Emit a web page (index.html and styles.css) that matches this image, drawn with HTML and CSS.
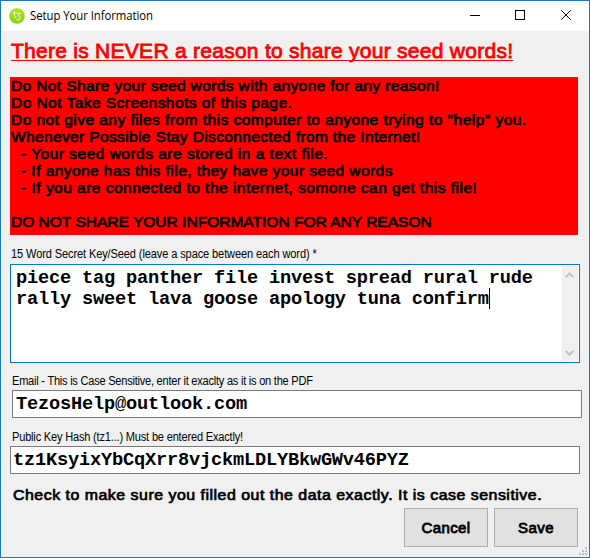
FILE: index.html
```html
<!DOCTYPE html>
<html lang="en">
<head>
<meta charset="utf-8">
<title>Setup Your Information</title>
<link rel="stylesheet" href="styles.css">
</head>
<body>
<div class="window">
  <header class="titlebar">
    <svg class="logo" width="16" height="16" viewBox="0 0 16 16">
      <defs><linearGradient id="g" x1="0" y1="0" x2="0" y2="1"><stop offset="0" stop-color="#b4e31a"/><stop offset="1" stop-color="#80d30c"/></linearGradient></defs>
      <circle cx="8" cy="8" r="7.8" fill="url(#g)"/>
      <path d="M3.7 5.2H11.5L8.9 7.7Q11.3 7.7 11.3 9.8Q11.3 12 8.9 12Q7.4 12 7.4 10.8M5.5 3.2V8.5Q5.5 9.8 7.3 9.2" fill="none" stroke="#f4fbe0" stroke-width="1"/>
    </svg>
    <span class="title">Setup Your Information</span>
    <svg class="controls" width="138" height="30" viewBox="0 0 138 30" fill="none" stroke="#000" stroke-width="1">
      <path d="M19 14.5H29"/>
      <rect x="64.5" y="9.5" width="9" height="9"/>
      <path d="M110.2 9.2L119.8 18.8M119.8 9.2L110.2 18.8"/>
    </svg>
  </header>
  <main class="client">
    <h1 class="headline"><span class="headline-text">There is NEVER a reason to share your seed words!</span></h1>
    <div class="warning">
      <div class="line l1">Do Not Share your seed words with anyone for any reason!</div>
      <div class="line l2">Do Not Take Screenshots of this page.</div>
      <div class="line l3">Do not give any files from this computer to anyone trying to "help" you.</div>
      <div class="line l4">Whenever Possible Stay Disconnected from the Internet!</div>
      <div class="line item l5">- Your seed words are stored in a text file.</div>
      <div class="line item l6">- If anyone has this file, they have your seed words</div>
      <div class="line item l7">- If you are connected to the internet, somone can get this file!</div>
      <div class="blank"></div>
      <div class="line l9">DO NOT SHARE YOUR INFORMATION FOR ANY REASON</div>
    </div>
    <div class="label label-seed">15 Word Secret Key/Seed (leave a space between each word) *</div>
    <div class="seed">
      <div class="seed-text">piece tag panther file invest spread rural rude<br>rally sweet lava goose apology tuna confirm<span class="caret"></span></div>
      <div class="scroll">
        <svg width="16" height="16" viewBox="0 0 16 16"><path d="M3.7 11.1L7.5 7.3L11.3 11.1" fill="none" stroke="#bfbfbf" stroke-width="2"/></svg>
        <svg width="16" height="16" viewBox="0 0 16 16"><path d="M3.7 5.9L7.5 9.7L11.3 5.9" fill="none" stroke="#bfbfbf" stroke-width="2"/></svg>
      </div>
    </div>
    <div class="label label-email">Email - This is Case Sensitive, enter it exaclty as it is on the PDF</div>
    <div class="field email">TezosHelp<span class="at">@</span>outlook.com</div>
    <div class="label label-hash">Public Key Hash (tz1...) Must be entered Exactly!</div>
    <div class="field hash">tz1KsyixYbCqXrr8vjckmLDLYBkwGWv46PYZ</div>
    <div class="check">Check to make sure you filled out the data exactly. It is case sensitive.</div>
    <div class="actions">
      <button class="btn" type="button">Cancel</button>
      <button class="btn save" type="button">Save</button>
    </div>
    <svg class="grip" width="8" height="8" viewBox="0 0 8 8" fill="#bfbfbf"><path d="M6 0h2v2h-2zM3 3h2v2h-2zM6 3h2v2h-2zM0 6h2v2h-2zM3 6h2v2h-2zM6 6h2v2h-2z"/></svg>
  </main>
</div>
</body>
</html>
```
FILE: styles.css
```css
* { box-sizing: border-box; }
body { margin: 0; font-family: "Liberation Sans", Arial, sans-serif; color: #000; }
.window { width: 590px; height: 558px; border: 1px solid #1979ca; background: #f0f0f0; display: flex; flex-direction: column; position: relative; overflow: hidden; white-space: nowrap; }
.titlebar { height: 30px; flex: none; background: #fff; display: flex; align-items: center; padding-left: 8px; }
.logo { margin-top: -1px; }
.title { font: 12px/30px "Open Sans", "Noto Sans", sans-serif; margin-left: 5px; letter-spacing: -0.05px; transform: scaleX(0.945); transform-origin: 0 0; }
.controls { margin-left: auto; }
.client { flex: 1; display: flex; flex-direction: column; }
.headline { margin: 7px 0 0 10px; height: 31px; font-size: 21px; line-height: 26px; font-weight: 400; color: #f00; -webkit-text-stroke: 0.8px #f00; }
.headline-text { display: inline-block; height: 23px; border-bottom: 1px solid #f00; letter-spacing: 0.27px; }
.warning { margin: 8px 0 0 9px; width: 568px; height: 158px; padding: 1px 1px 0; background: #f00; font-size: 14px; line-height: 17px; -webkit-text-stroke: 0.7px #000; letter-spacing: 0.4px; }
.line { width: max-content; transform: scaleX(1.1); transform-origin: 0 0; }
.item { margin-left: 10px; }
.l2, .l3 { letter-spacing: 0.46px; }
.l4 { letter-spacing: 0.38px; }
.l5 { letter-spacing: 0.49px; }
.l6 { letter-spacing: 0.44px; }
.l7 { letter-spacing: 0.48px; }
.l9 { letter-spacing: 0.07px; }
.blank { height: 17px; }
.label { font-size: 12px; line-height: 14px; margin-left: 11px; letter-spacing: -0.2px; width: max-content; transform: scaleX(0.92); transform-origin: 0 0; }
.label-seed { margin: 12px 0 3px 10px; letter-spacing: -0.12px; }
.seed { margin-left: 9px; width: 570px; height: 99px; border: 1px solid #0078d7; background: #fff; display: flex; justify-content: space-between; padding: 1px; font: bold 18.67px/21px "Liberation Mono", monospace; letter-spacing: -0.2px; }
.seed-text { padding: 2px 0 0 4px; }
.caret { display: inline-block; width: 1px; height: 21px; background: #000; vertical-align: top; margin-top: -1px; }
.scroll { width: 16px; background: #f0f0f0; display: flex; flex-direction: column; justify-content: space-between; }
.label-email { margin-top: 11px; letter-spacing: -0.25px; }
.field { border: 1px solid #7a7a7a; background: #fff; width: 570px; height: 28px; font: bold 18.67px/26px "Liberation Mono", monospace; letter-spacing: -0.2px; padding-left: 3px; }
.at { font-weight: 400; }
.email { margin: 2px 0 0 11px; }
.label-hash { margin-top: 12px; }
.hash { margin: 2px 0 0 9px; padding-left: 2px; }
.check { margin: 12px 0 0 12px; height: 18px; font-size: 15px; line-height: 18px; -webkit-text-stroke: 0.7px #000; letter-spacing: 0.48px; width: max-content; transform: scaleX(1.06); transform-origin: 0 0; }
.actions { display: flex; gap: 6px; justify-content: flex-end; margin: 4px 11px 0 0; }
.btn { width: 84px; height: 39px; padding: 0; border: 1px solid #adadad; background: #e1e1e1; font: 15px/20px "Liberation Sans", Arial, sans-serif; color: #000; -webkit-text-stroke: 0.8px #000; letter-spacing: 0.4px; }
.grip { position: absolute; right: 2px; bottom: 2px; }
```
